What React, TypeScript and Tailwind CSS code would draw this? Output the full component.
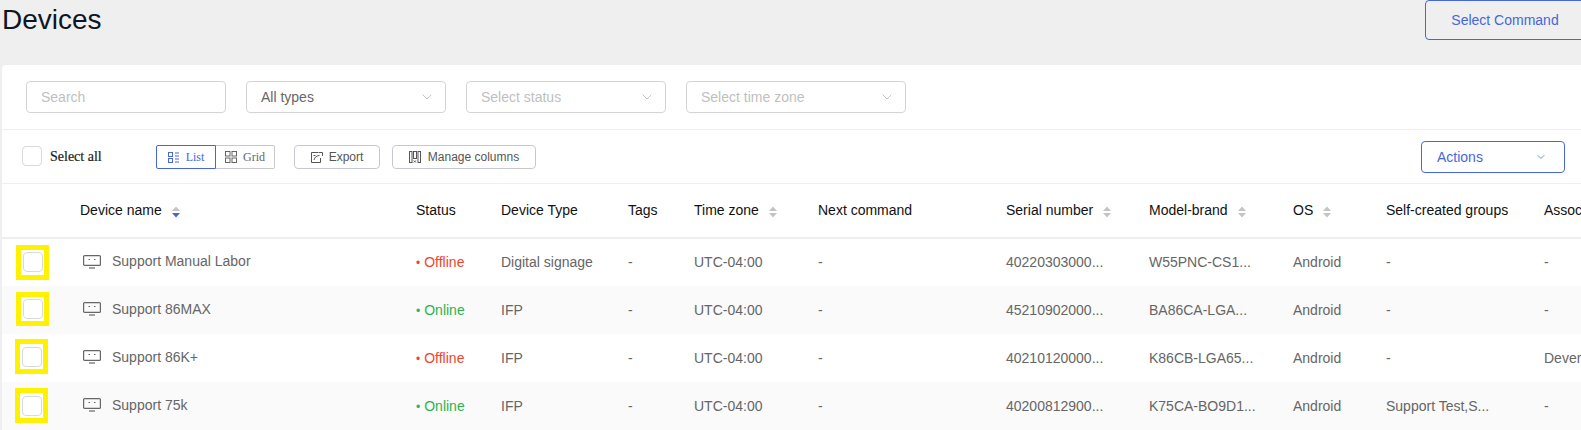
import { ChevronDown } from 'lucide-react';

const BLUE = '#4766dc';

const rows = [
  { name: 'Support Manual Labor', status: 'Offline', type: 'Digital signage', serial: '40220303000...', model: 'W55PNC-CS1...', groups: '-', assoc: '-', mark: 'ml-[14px] mt-[-1px] h-[35px]' },
  { name: 'Support 86MAX', status: 'Online', type: 'IFP', serial: '45210902000...', model: 'BA86CA-LGA...', groups: '-', assoc: '-', mark: 'ml-[14px] mt-[-2px] h-[34px]' },
  { name: 'Support 86K+', status: 'Offline', type: 'IFP', serial: '40210120000...', model: 'K86CB-LGA65...', groups: '-', assoc: 'Dever', mark: 'ml-[13px] mt-[-3px] h-[35px]' },
  { name: 'Support 75k', status: 'Online', type: 'IFP', serial: '40200812900...', model: 'K75CA-BO9D1...', groups: 'Support Test,S...', assoc: '-', mark: 'ml-[13px] mt-[-1px] h-[35px]' },
];

const columns = [
  { label: '', width: 'w-[62px]' },
  { label: 'Device name', width: 'w-[336px]', sort: 'active' },
  { label: 'Status', width: 'w-[85px]' },
  { label: 'Device Type', width: 'w-[127px]' },
  { label: 'Tags', width: 'w-[66px]' },
  { label: 'Time zone', width: 'w-[124px]', sort: 'idle' },
  { label: 'Next command', width: 'w-[188px]' },
  { label: 'Serial number', width: 'w-[143px]', sort: 'idle' },
  { label: 'Model-brand', width: 'w-[144px]', sort: 'idle' },
  { label: 'OS', width: 'w-[93px]', sort: 'idle' },
  { label: 'Self-created groups', width: 'w-[158px]' },
  { label: 'Associated', width: 'w-[200px]' },
];

function SortIcon({ active }: { active: boolean }) {
  return (
    <svg width="8" height="12" viewBox="0 0 8 12" className="ml-[10px] mt-[2px] shrink-0">
      <path d="M4 0.5 L8 5 H0 Z" fill="#c4c4c4" />
      <path d="M4 11.5 L8 7 H0 Z" fill={active ? BLUE : '#c4c4c4'} />
    </svg>
  );
}

function DeviceIcon() {
  return (
    <svg width="18" height="14" viewBox="0 0 18 14" fill="none" className="shrink-0">
      <rect x="0.6" y="0.6" width="16.8" height="9.8" rx="1" stroke="#666" strokeWidth="1.2" />
      <path d="M5.5 4.5h1.5M11 4.5h1.5" stroke="#666" strokeWidth="1.2" />
      <path d="M6 13h6" stroke="#666" strokeWidth="1.2" />
    </svg>
  );
}

function ListIcon() {
  return (
    <svg width="11" height="11" viewBox="0 0 11 11" fill="none" stroke={BLUE} strokeWidth="1">
      <rect x="0.5" y="0.5" width="4" height="4" />
      <rect x="0.5" y="6.500" width="4" height="4" />
      <path d="M7 1h4M7 4h4M7 7h4M7 10h4" />
    </svg>
  );
}

function GridIcon() {
  return (
    <svg width="12" height="12" viewBox="0 0 12 12" fill="none" stroke="#666" strokeWidth="1">
      <rect x="0.5" y="0.5" width="4.500" height="4.500" />
      <rect x="7" y="0.5" width="4.500" height="4.500" />
      <rect x="0.5" y="7" width="4.500" height="4.500" />
      <rect x="7" y="7" width="4.500" height="4.500" />
    </svg>
  );
}

function ExportIcon() {
  return (
    <svg width="12" height="12" viewBox="0 0 12 12" fill="none" stroke="#555" strokeWidth="1">
      <path d="M9.500 7v4.500H0.5V1.500H7" />
      <path d="M3 9c.5-2.500 2.500-4.500 5.500-4.500M7.500 1.500H11.500V5M2.500 4.500h2" />
    </svg>
  );
}

function ColumnsIcon() {
  return (
    <svg width="12" height="12" viewBox="0 0 12 12" fill="none" stroke="#555" strokeWidth="1">
      <rect x="0.5" y="0.5" width="2.500" height="11" />
      <rect x="4.500" y="0.5" width="3" height="7" />
      <rect x="9" y="0.5" width="2.500" height="11" />
      <path d="M4.800 9.500l2 2M6.800 9.500l-2 2" />
    </svg>
  );
}

function FakeSelect({ label, placeholder, width }: { label: string; placeholder?: boolean; width: string }) {
  return (
    <div className={`${width} flex h-[32px] items-center justify-between rounded border border-[#d4d4d4] bg-white pl-[14px] pr-[10px] text-[14px] ${placeholder ? 'text-[#bfbfbf]' : 'text-[#666666]'}`}>
      <span>{label}</span>
      <ChevronDown size={16} strokeWidth={1} color="#a8a8a8" />
    </div>
  );
}

export default function App() {
  return (
    <div className="h-[430px] w-[1581px] overflow-hidden bg-[#efefef] font-['Liberation_Sans',Arial,sans-serif] text-[14px]">
      {/* Title row */}
      <div className="flex h-[65px] items-start justify-between pl-[2px]">
        <h1 className="text-[28px] leading-[40px] text-[#0d1626]">Devices</h1>
        <button className="mr-[-4px] h-[40px] w-[160px] rounded border border-[#4766dc] text-[14px] text-[#4766dc]">
          Select Command
        </button>
      </div>

      <div className="ml-[2px] w-[1579px] overflow-hidden rounded-tl bg-white">
        {/* Filters */}
        <div className="flex h-[65px] gap-[20px] border-b border-[#efefef] pl-[24px] pt-[16px]">
          <input
            placeholder="Search"
            className="h-[32px] w-[200px] rounded border border-[#d4d4d4] px-[14px] text-[14px] outline-none placeholder:text-[#bfbfbf]"
          />
          <FakeSelect label="All types" width="w-[200px]" />
          <FakeSelect label="Select status" placeholder width="w-[200px]" />
          <FakeSelect label="Select time zone" placeholder width="w-[220px]" />
        </div>

        {/* Toolbar */}
        <div className="flex h-[54px] items-start border-b border-[#efefef] pl-[20px] pr-[16px]">
          <div className="mt-[15px] flex items-center">
            <div className="h-[20px] w-[20px] rounded-sm border border-[#d9d9d9]" />
            <span className="ml-[8px] w-[52px] whitespace-nowrap pt-[1px] font-['Liberation_Serif',serif] text-[14px] text-[#222222] [-webkit-text-stroke:0.2px_#222222]">Select all</span>
          </div>
          <div className="ml-[54px] mt-[15px] flex h-[24px] font-['Liberation_Serif',serif] text-[12px]">
            <div className="flex w-[60px] items-center justify-center gap-[7px] rounded-l-[2px] border border-[#4766dc] text-[#4766dc]">
              <ListIcon />
              List
            </div>
            <div className="flex w-[59px] items-center justify-center gap-[6px] rounded-r-[2px] border border-l-0 border-[#c8c8d0] text-[#666666]">
              <GridIcon />
              Grid
            </div>
          </div>
          <button className="ml-[19px] mt-[15px] flex h-[24px] w-[86px] items-center justify-center gap-[6px] rounded border border-[#c8c8d0] text-[12px] text-[#555555]">
            <ExportIcon />
            Export
          </button>
          <button className="ml-[12px] mt-[15px] flex h-[24px] w-[144px] items-center justify-center gap-[7px] rounded border border-[#c8c8d0] text-[12px] text-[#555555]">
            <ColumnsIcon />
            Manage columns
          </button>
          <button className="ml-auto mt-[11px] flex h-[32px] w-[144px] items-center justify-between rounded border border-[#4766dc] pl-[15px] pr-[17px] text-[14px] text-[#4766dc]">
            Actions
            <ChevronDown size={12} strokeWidth={1.5} />
          </button>
        </div>

        {/* Table */}
        <table className="w-[1591px] table-fixed border-collapse">
          <colgroup>
            {columns.map(c => <col key={c.label} className={c.width} />)}
          </colgroup>
          <thead>
            <tr className="h-[54px] border-b-2 border-[#efefef]">
              {columns.map(c => (
                <th key={c.label} className="overflow-hidden whitespace-nowrap px-[16px] text-left text-[14px] font-normal text-[#111111]">
                  <div className="flex items-center">
                    {c.label}
                    {c.sort && <SortIcon active={c.sort === 'active'} />}
                  </div>
                </th>
              ))}
            </tr>
          </thead>
          <tbody>
            {rows.map((r, i) => (
              <tr key={r.name} className={`h-[48px] text-[#666666] ${i % 2 === 1 ? 'bg-[#fafafa]' : 'bg-white'}`}>
                <td className="p-0">
                  <div className={`flex w-[33px] items-center justify-center border-[5px] border-[#fff200] bg-white ${r.mark}`}>
                    <div className="h-[20px] w-[20px] rounded-sm border border-[#d9d9d9]" />
                  </div>
                </td>
                <td className="px-[16px]">
                  <div className="flex items-center gap-[11px] pb-[2px] pl-[3px]">
                    <DeviceIcon />
                    <span>{r.name}</span>
                  </div>
                </td>
                <td className="px-[16px] whitespace-nowrap">
                  <span className={r.status === 'Online' ? 'text-[#2fb350]' : 'text-[#f0452d]'}>
                    <span className="mr-[4px] text-[12px]">•</span>{r.status}
                  </span>
                </td>
                <td className="px-[16px] whitespace-nowrap">{r.type}</td>
                <td className="px-[16px]">-</td>
                <td className="px-[16px] whitespace-nowrap">UTC-04:00</td>
                <td className="px-[16px]">-</td>
                <td className="px-[16px] whitespace-nowrap">{r.serial}</td>
                <td className="px-[16px] whitespace-nowrap">{r.model}</td>
                <td className="px-[16px]">Android</td>
                <td className="px-[16px] whitespace-nowrap">{r.groups}</td>
                <td className="px-[16px] whitespace-nowrap">{r.assoc}</td>
              </tr>
            ))}
          </tbody>
        </table>
      </div>
    </div>
  );
}
